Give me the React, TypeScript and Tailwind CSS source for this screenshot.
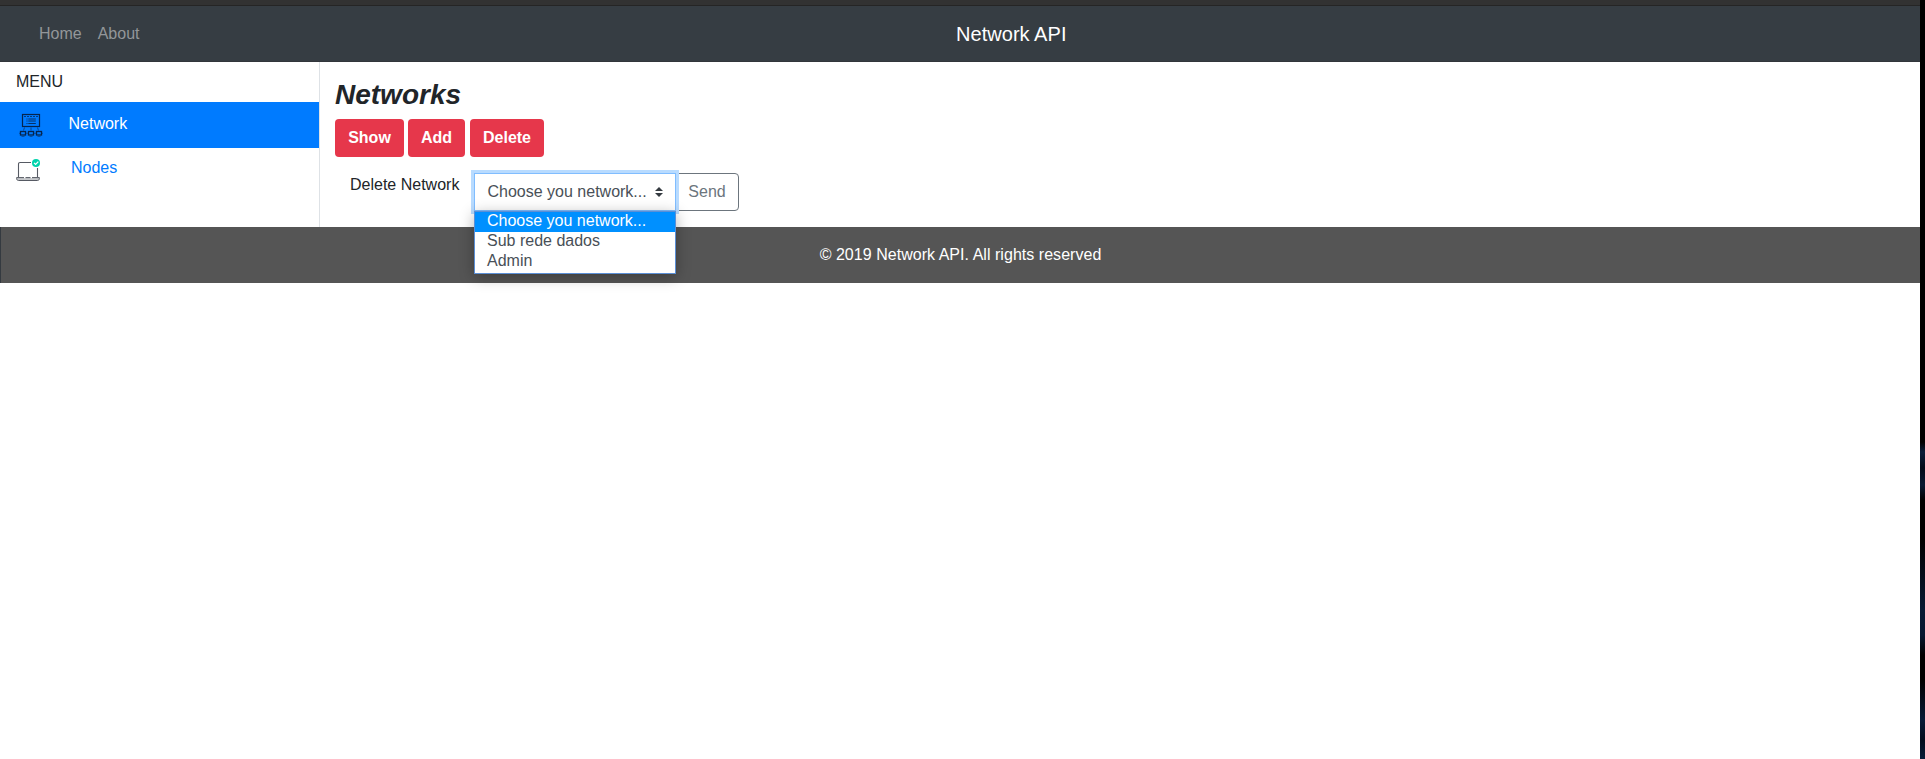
function NetworkIcon() {
  return (
    <svg width="24" height="24" viewBox="0 0 24 24" fill="none" stroke="#06254d" className="block">
      <rect x="3.5" y="1.5" width="17" height="12" strokeWidth="1.2" />
      <path d="M5 3.5h14" strokeWidth="1" strokeDasharray="2 1" opacity="0.75" />
      <path d="M7.5 6h1M9.3 6h7.5M7.5 8h1M9.3 8h7.5M7.5 10.5h1M9.3 10.5h7.5" strokeWidth="1" opacity="0.85" />
      <path d="M5.5 14.5l-1 3M12 14.5v3M18.5 14.5l1 3" strokeWidth="1" opacity="0.6" />
      <g strokeWidth="1.3">
        <rect x="1.5" y="18.5" width="5" height="3.5" />
        <rect x="9.5" y="18.5" width="5" height="3.5" />
        <rect x="17.5" y="18.5" width="5" height="3.5" />
      </g>
      <path
        d="M0 20.3h1M7 20.3h2M15 20.3h2M23 20.3h1M2.5 23.5h3M10.5 23.5h3M18.5 23.5h3"
        strokeWidth="1"
        opacity="0.5"
      />
    </svg>
  );
}

function NodesIcon() {
  return (
    <svg width="24" height="24" viewBox="0 0 24 24" fill="none" stroke="#565a63" className="block">
      <path d="M2.5 18V5.2c0-1 .6-1.7 1.6-1.7H15" strokeWidth="1.1" />
      <path d="M21.5 9v9" strokeWidth="1.1" />
      <path d="M.6 18.6h22.8v.9c0 1.2-.8 2-2 2H2.6c-1.2 0-2-.8-2-2z" fill="#c5c7ca" strokeWidth="1" />
      <path d="M8 18.6h1.5M14.5 18.6H16" stroke="#ffffff" strokeWidth="1.4" />
      <circle cx="20" cy="4" r="4" fill="#00d3ac" stroke="none" />
      <path d="M18 3.9l1.6 1.5 2.7-2.8" stroke="#ffffff" strokeWidth="1.3" />
    </svg>
  );
}

function TopBar() {
  return (
    <header className="flex h-14 items-center border-b border-[#32363b] bg-[#363d43] pl-[39px]">
      <nav className="flex w-[917px] gap-4 text-[#939699]">
        <a>Home</a>
        <a>About</a>
      </nav>
      <div className="text-xl leading-[30px] tracking-[0.04px] text-white">Network API</div>
    </header>
  );
}

function Sidebar() {
  return (
    <aside className="w-80 shrink-0 border-r border-[#dee2e6] bg-white pt-2">
      <div className="h-8 pl-4 text-[#212529]">MENU</div>
      <a className="flex h-[46px] items-start bg-[#007bff] pt-[10px] pl-[19px] text-white">
        <span className="mt-px w-[49.5px]">
          <NetworkIcon />
        </span>
        Network
      </a>
      <a className="flex items-start pt-2 pl-4 text-[#007bff]">
        <span className="mt-[3px] w-[55px]">
          <NodesIcon />
        </span>
        Nodes
      </a>
    </aside>
  );
}

const options = ["Choose you network...", "Sub rede dados", "Admin"];

function NetworkSelect() {
  return (
    <div className="relative z-10">
      <div className="flex h-[38px] w-[202px] items-center justify-between border border-[#80bdff] bg-white pr-3 pl-[12.5px] text-[#495057] shadow-[0_0_0_3px_#b8dbff]">
        <span className="whitespace-nowrap">{options[0]}</span>
        <svg width="8" height="10" viewBox="0 0 4 5" fill="#343a40">
          <path d="M2 0L0 2h4zm0 5L0 3h4z" />
        </svg>
      </div>
      <ul className="absolute top-[38px] left-0 w-[202px] border border-[#5b8fd6] bg-white pb-px leading-5 text-[#495057] shadow-[0_3px_14px_rgba(0,0,0,0.3)]">
        {options.map((option, i) => (
          <li key={option} className={i === 0 ? "h-5 bg-[#0090ff] pl-3 text-white" : "h-5 pl-3"}>
            <span className="relative -top-px">{option}</span>
          </li>
        ))}
      </ul>
    </div>
  );
}

function Content() {
  return (
    <main className="flex-1 pt-4 pl-[15px] text-[#212529]">
      <h3 className="text-[28px] leading-[33px] font-bold italic">Networks</h3>
      <div className="mt-2 flex text-white">
        <button className="h-[38px] w-[69px] rounded bg-[#e6374b] font-bold">Show</button>
        <button className="ml-1 h-[38px] w-[57px] rounded bg-[#e6374b] font-bold">Add</button>
        <button className="ml-[5px] h-[38px] w-[74px] rounded bg-[#e6374b] font-bold">Delete</button>
      </div>
      <div className="mt-4 flex items-start pl-[15px]">
        <label className="w-[124px]">Delete Network</label>
        <NetworkSelect />
        <button className="-ml-px h-[38px] w-16 rounded-r border border-[#6c757d] text-[#6c757d]">Send</button>
      </div>
    </main>
  );
}

export default function App() {
  return (
    <div className="flex h-[759px] w-[1925px] overflow-hidden bg-white font-['Liberation_Sans',Arial,sans-serif] text-base leading-6">
      <div className="w-[1920px] shrink-0">
        <div className="h-1.5 border-b border-[#252525] bg-[#323232]" />
        <TopBar />
        <div className="flex h-[165px]">
          <Sidebar />
          <Content />
        </div>
        <footer className="flex h-14 items-center justify-center border-l border-[#343a40] bg-[#555555] tracking-[0.035px] text-white">
          © 2019 Network API. All rights reserved
        </footer>
      </div>
      <div className="w-[5px] bg-[linear-gradient(to_bottom,#000_0,#000_442px,#0a1e3a_452px,#020a18_468px,#081a33_485px,#000_500px,#000_540px,#071a33_610px,#061730_635px,#000_655px,#000_680px,#071a36_720px,#020c1c_740px,#071c38_759px)]" />
    </div>
  );
}
